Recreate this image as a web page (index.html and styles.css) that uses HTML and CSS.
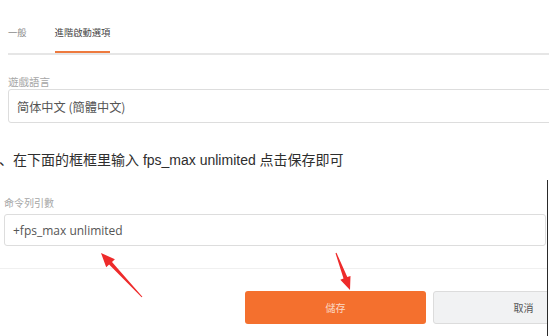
FILE: index.html
```html
<!DOCTYPE html>
<html lang="zh">
<head>
<meta charset="utf-8">
<link rel="stylesheet" href="styles.css">
</head>
<body>
<div class="page">
  <section class="shot-top">
    <nav class="tabs">
      <div class="tab">一般</div>
      <div class="tab active">進階啟動選項</div>
    </nav>
    <div class="field-label lang-label">遊戲語言</div>
    <div class="select-box">简体中文 (簡體中文)</div>
  </section>

  <p class="instruction">、在下面的框框里输入 fps_max unlimited 点击保存即可</p>

  <section class="shot-bottom">
    <div class="field-label cmd-label">命令列引數</div>
    <div class="text-box">+fps_max unlimited</div>
    <div class="divider"></div>
    <div class="buttons">
      <div class="btn btn-save">儲存</div>
      <div class="btn btn-cancel">取消</div>
    </div>
  </section>

  <svg class="arrows" width="549" height="336" viewBox="0 0 549 336" xmlns="http://www.w3.org/2000/svg">
    <polygon fill="#ee2b2b" points="142.4,296.7 112.0,261.9 114.9,259.2 101,253 106.2,267.3 109.1,264.6 141.6,297.3"/>
    <polygon fill="#ee2b2b" points="336.5,252.8 347.3,277.1 350.5,275.9 350,290 340.3,279.8 343.5,278.6 335.5,253.2"/>
  </svg>
</div>
</body>
</html>
```

FILE: styles.css
```css
html, body {
  margin: 0;
  padding: 0;
  background: #ffffff;
}

.page {
  position: relative;
  width: 549px;
  height: 336px;
  overflow: hidden;
  font-family: "Noto Sans CJK TC", "Noto Sans", sans-serif;
}

.shot-top {
  padding-left: 8px;
}

.tabs {
  display: flex;
  gap: 28px;
  padding-top: 22px;
  border-bottom: 2px solid #e6e6e6;
  margin-right: -20px;
}

.tab {
  font-size: 9.3px;
  line-height: 20px;
  padding-bottom: 9px;
  border-bottom: 2px solid transparent;
  color: #8a8a8a;
}

.tab.active {
  color: #444444;
  border-bottom-color: #ee7a3e;
}

.field-label {
  color: #a6a6a6;
  line-height: 14px;
}

.lang-label {
  font-size: 10.5px;
  margin-top: 20px;
}

.select-box {
  box-sizing: border-box;
  height: 34px;
  width: 560px;
  border: 1px solid #dddddd;
  border-radius: 3px;
  padding: 1px 0 0 8px;
  font-size: 12.2px;
  line-height: 32px;
  color: #555555;
}

.instruction {
  margin: 27px 0 0 -1px;
  font-family: "Liberation Sans", "Noto Sans CJK SC", sans-serif;
  font-size: 14px;
  line-height: 20px;
  color: #2e2e2e;
  white-space: nowrap;
}

.shot-bottom {
  box-sizing: border-box;
  margin-top: 10px;
  width: 548px;
  height: 160px;
  border-right: 1.5px solid #2a2a2a;
  overflow: hidden;
}

.cmd-label {
  font-size: 10px;
  padding: 16px 0 0 4px;
}

.text-box {
  box-sizing: border-box;
  height: 32px;
  margin: 4px 1px 0 4px;
  border: 1px solid #dddddd;
  border-radius: 3px;
  padding: 2px 0 0 8px;
  font-family: "Open Sans", sans-serif;
  font-size: 12px;
  line-height: 28px;
  color: #555555;
}

.divider {
  margin-top: 22px;
  height: 1px;
  background: #f0f0f0;
}

.buttons {
  display: flex;
  gap: 7px;
  padding-left: 245px;
  margin-top: 22px;
}

.btn {
  flex: 0 0 181px;
  box-sizing: border-box;
  height: 33px;
  border-radius: 3px;
  text-align: center;
  font-size: 10px;
  line-height: 33px;
}

.btn-save {
  background: #f4702e;
  color: #fbd9c6;
}

.btn-cancel {
  background: #f1f2f3;
  border: 1px solid #dcdcdc;
  line-height: 31px;
  color: #555555;
}

.arrows {
  position: absolute;
  left: 0;
  top: 0;
  pointer-events: none;
}
```
